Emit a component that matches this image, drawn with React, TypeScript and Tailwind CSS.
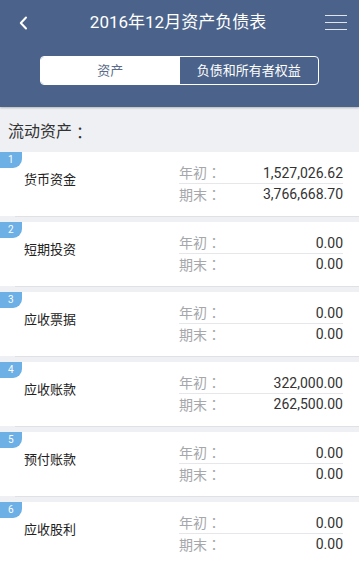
import React from 'react';

interface AssetRow {
  id: number;
  name: string;
  begin: string;
  end: string;
}

const rows: AssetRow[] = [
  { id: 1, name: '货币资金', begin: '1,527,026.62', end: '3,766,668.70' },
  { id: 2, name: '短期投资', begin: '0.00', end: '0.00' },
  { id: 3, name: '应收票据', begin: '0.00', end: '0.00' },
  { id: 4, name: '应收账款', begin: '322,000.00', end: '262,500.00' },
  { id: 5, name: '预付账款', begin: '0.00', end: '0.00' },
  { id: 6, name: '应收股利', begin: '0.00', end: '0.00' },
];

const font = { fontFamily: 'Roboto, "Noto Sans CJK SC", sans-serif' };
// 全角冒号居中显示
const colonFont = { fontFamily: '"Noto Sans CJK JP", sans-serif' };

export default function App() {
  return (
    <div className="w-[359px] h-[566px] overflow-hidden bg-[#eef0f3]" style={font}>
      {/* 顶部栏 */}
      <div className="bg-[#4b638a] h-[107px] shadow-[0_1px_2px_rgba(0,0,0,0.25)] relative z-10">
        <div className="h-[45px] flex items-center justify-between px-[16px]">
          <svg width="14" height="16" viewBox="0 0 14 16" className="ml-[1px]">
            <path d="M9 2.5 L3.8 8 L9 13.5" stroke="#ffffff" strokeWidth="2" fill="none" strokeLinecap="round" strokeLinejoin="round" />
          </svg>
          <h1 className="text-white text-[17px] leading-none">2016年12月资产负债表</h1>
          <div className="flex flex-col gap-[5.5px] w-[22px] mr-[-4px]">
            <span className="h-[1.5px] bg-[#dfe5ee]" />
            <span className="h-[1.5px] bg-[#dfe5ee]" />
            <span className="h-[1.5px] bg-[#dfe5ee]" />
          </div>
        </div>
        <div className="flex justify-center mt-[11px]">
          <div className="flex w-[279px] h-[29px] border border-white rounded-[4px] overflow-hidden">
            <div className="flex-1 bg-white flex items-center justify-center text-[13px] text-[#5a6c8a]">资产</div>
            <div className="flex-1 flex items-center justify-center text-[13px] text-white">负债和所有者权益</div>
          </div>
        </div>
      </div>

      <div className="h-[45px] flex items-center px-[8px] text-[16px] text-[#333] pt-[4px]">
        流动资产<span style={colonFont}>：</span>
      </div>

      <div className="flex flex-col">
        {rows.map((row) => (
          <div key={row.id} className="mb-[5px]">
            <div className="relative bg-white h-[64px] flex">
              <span className="absolute left-0 top-0 w-[22px] h-[16px] bg-[#6cb0e6] rounded-br-[9px] text-white text-[10px] leading-[16px] pl-[8px]">
                {row.id}
              </span>
              <div className="w-[179px] pl-[24px] pt-[18px] text-[13px] text-[#222]">{row.name}</div>
              <div className="w-[164px] pt-[11px] text-[14px]">
                <div className="h-[21px] flex items-center justify-between border-b border-[#e6e7ea]">
                  <span className="text-[#a5a7ab]">年初<span style={colonFont}>：</span></span>
                  <span className="text-[#333]">{row.begin}</span>
                </div>
                <div className="h-[21px] flex items-center justify-between">
                  <span className="text-[#a5a7ab]">期末<span style={colonFont}>：</span></span>
                  <span className="text-[#333]">{row.end}</span>
                </div>
              </div>
            </div>
            <div className="ml-[15px] h-px bg-[#dfe1e5]" />
          </div>
        ))}
      </div>
    </div>
  );
}
